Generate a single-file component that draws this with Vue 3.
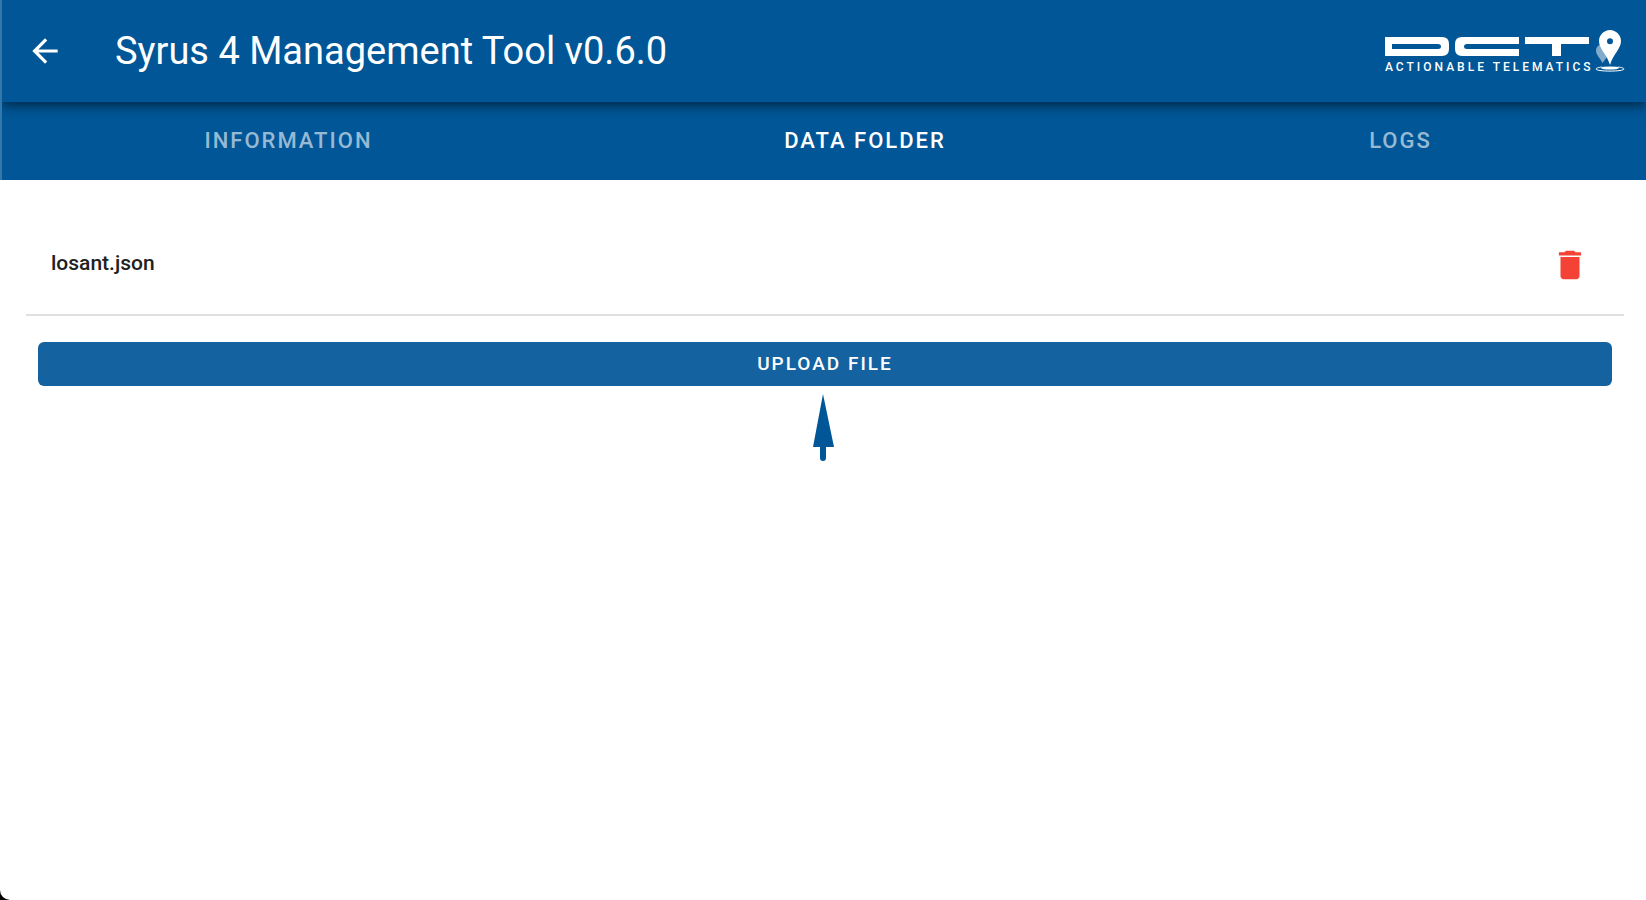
<script setup>
import { ref } from 'vue'

const tabs = ['Information', 'Data Folder', 'Logs']
const activeTab = ref('Data Folder')
const files = ref(['losant.json'])

function removeFile(name) {
  files.value = files.value.filter((f) => f !== name)
}
</script>

<template>
  <div class="window">
    <div class="top">
      <header class="toolbar">
        <button class="icon-button back" type="button" aria-label="Back">
          <svg class="icon" viewBox="0 0 24 24" aria-hidden="true">
            <path d="M20 11H7.83l5.59-5.59L12 4l-8 8 8 8 1.41-1.41L7.83 13H20v-2z" />
          </svg>
        </button>
        <h1 class="title">Syrus 4 Management Tool v0.6.0</h1>
        <div class="brand">
          <div class="wordmark">
            <svg class="mark" viewBox="0 0 205 19" aria-hidden="true">
              <path fill-rule="evenodd" d="M0 0H57Q64 0 64 7V12Q64 19 57 19H0ZM7 7V12H53Q56 12 56 9.5T53 7Z" />
              <path d="M134 0H77Q70 0 70 7V12Q70 19 77 19H134V12H82Q79 12 79 9.5T82 7H134Z" />
              <path d="M140 0H204V7H176V19H167V7H140Z" />
            </svg>
            <span class="tagline">ACTIONABLE TELEMATICS</span>
          </div>
          <svg class="pin" viewBox="0 0 30 43" aria-hidden="true">
            <path class="pin-shade" d="M10 15C4 14.500 1 18 1 21.500C1 26 5 29 7.500 34L12 28Z" />
            <path fill-rule="evenodd" d="M15 1C9 1 4 6 4 12C4 20 12 25 15 36C18 25 26 20 26 12C26 6 21 1 15 1ZM15 9.2A3 3 0 1 1 15 15.2A3 3 0 1 1 15 9.2Z" />
            <path class="ripple" d="M7 38C3 38.500 1 39.200 1 40C1 41.200 7 42.100 15 42.100S29 41.200 29 40C29 39.200 27 38.500 23 38" />
            <ellipse cx="15" cy="39" rx="9" ry="1.600" />
          </svg>
        </div>
      </header>
      <nav class="tabs" role="tablist">
        <button
          v-for="tab in tabs"
          :key="tab"
          class="tab"
          :class="{ active: tab === activeTab }"
          type="button"
          role="tab"
          :aria-selected="tab === activeTab"
          @click="activeTab = tab"
        >{{ tab }}</button>
      </nav>
    </div>
    <main class="content">
      <ul class="files">
        <li v-for="file in files" :key="file" class="file">
          <span class="name">{{ file }}</span>
          <button class="icon-button delete" type="button" :aria-label="`Delete ${file}`" @click="removeFile(file)">
            <svg class="icon" viewBox="0 0 24 24" aria-hidden="true">
              <path d="M6 19c0 1.1.9 2 2 2h8c1.1 0 2-.9 2-2V7H6v12zM19 4h-3.5l-1-1h-5l-1 1H5v2h14V4z" />
            </svg>
          </button>
        </li>
      </ul>
      <button class="upload" type="button">Upload file</button>
      <svg class="pointer" viewBox="0 0 22 68" aria-hidden="true">
        <path d="M11 0L22 53H14V64A3 3 0 0 1 8 64V53H1Z" />
      </svg>
    </main>
  </div>
</template>

<style>
body {
  background: #000;
}
</style>

<style scoped>
.window {
  min-height: 100vh;
  background: #fff;
  border-bottom-left-radius: 10px;
  font-family: Roboto, "Liberation Sans", sans-serif;
  color: #212121;
}
button {
  border: 0;
  padding: 0;
  background: none;
  font-family: inherit;
  cursor: pointer;
}
.top {
  background: #005696;
  border-left: 2px solid #3377ab;
  color: #fff;
}
.toolbar {
  display: flex;
  align-items: center;
  height: 102px;
  padding: 0 21px 0 24px;
  box-shadow: 0 4px 10px rgba(0, 0, 0, 0.5);
  clip-path: inset(0 0 -20px 0);
}
.icon-button {
  display: flex;
}
.icon {
  display: block;
  width: 38px;
  height: 38px;
  fill: currentColor;
}
.back {
  color: #fff;
}
.title {
  margin: 0 auto 0 51px;
  font-size: 38px;
  font-weight: 400;
  line-height: 48px;
  white-space: nowrap;
}
.brand {
  display: flex;
  align-items: flex-end;
  gap: 5px;
  padding-bottom: 1px;
  fill: #fff;
}
.wordmark {
  display: flex;
  flex-direction: column;
  gap: 6px;
  width: 205px;
}
.mark {
  display: block;
  width: 205px;
  height: 19px;
}
.tagline {
  font-size: 12px;
  font-weight: 500;
  line-height: 10px;
  letter-spacing: 3px;
  white-space: nowrap;
}
.pin {
  display: block;
  width: 30px;
  height: 43px;
}
.pin-shade {
  opacity: 0.5;
}
.ripple {
  fill: none;
  stroke: #fff;
  stroke-width: 1;
}
.tabs {
  display: grid;
  grid-template-columns: 573fr 580fr 491fr;
  height: 78px;
}
.tab {
  padding-bottom: 2px;
  color: rgba(255, 255, 255, 0.6);
  font-size: 22px;
  font-weight: 500;
  letter-spacing: 2px;
  text-transform: uppercase;
}
.tab.active {
  color: #fff;
}
.content {
  display: flex;
  flex-direction: column;
  padding: 32px 22px 0 26px;
}
.files {
  margin: 0;
  padding: 0;
  list-style: none;
}
.file {
  display: flex;
  align-items: center;
  justify-content: space-between;
  height: 102px;
  padding: 0 35px 0 25px;
  border-bottom: 2px solid #e0e0e0;
}
.name {
  font-size: 21px;
  font-weight: 500;
  line-height: 24px;
}
.delete {
  padding-top: 4px;
  color: #f44336;
}
.upload {
  height: 44px;
  margin: 26px 12px 0;
  padding-bottom: 2px;
  border-radius: 6px;
  background: #1462a0;
  color: #fff;
  font-size: 19px;
  font-weight: 500;
  letter-spacing: 2px;
  text-transform: uppercase;
}
.pointer {
  align-self: center;
  width: 22px;
  height: 68px;
  margin: 8px 4px 0 0;
  fill: #005696;
}
</style>
